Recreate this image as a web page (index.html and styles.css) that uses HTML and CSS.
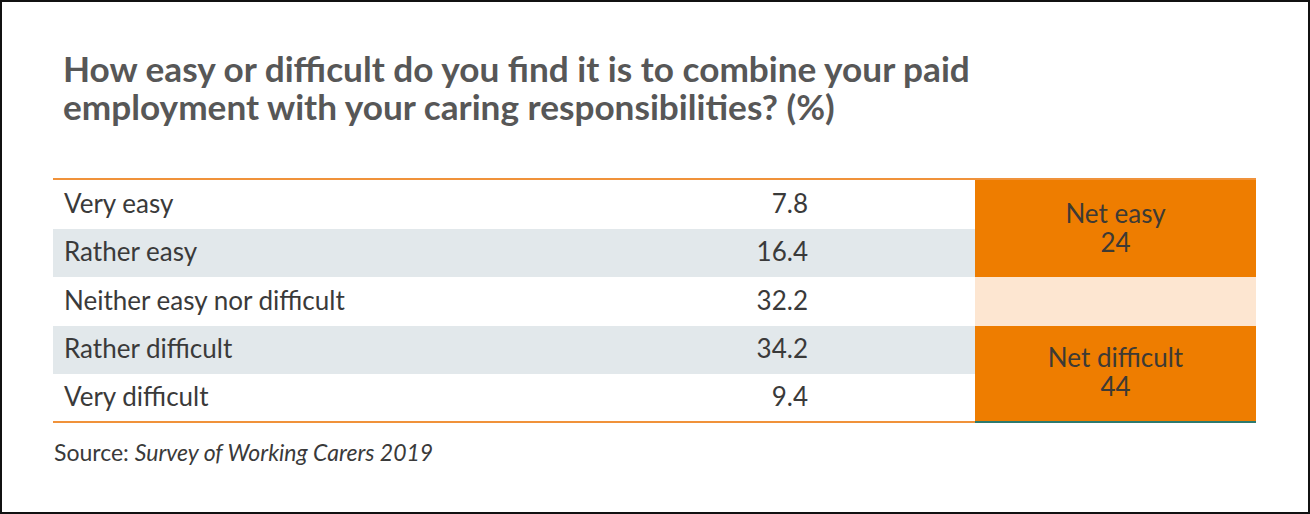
FILE: index.html
```html
<!DOCTYPE html>
<html>
<head>
<meta charset="utf-8">
<link rel="stylesheet" href="styles.css">
</head>
<body>
<div class="frame">
  <h1 class="title">How easy or difficult do you find it is to combine your paid<br>employment with your caring responsibilities? (%)</h1>
  <div class="table">
    <div class="cell label">Very easy</div><div class="cell value">7.8</div>
    <div class="net net-easy"><span>Net easy</span><span>24</span></div>
    <div class="cell label alt">Rather easy</div><div class="cell value alt">16.4</div>
    <div class="cell label">Neither easy nor difficult</div><div class="cell value">32.2</div>
    <div class="neutral"></div>
    <div class="cell label alt">Rather difficult</div><div class="cell value alt">34.2</div>
    <div class="net net-diff"><span>Net difficult</span><span>44</span></div>
    <div class="cell label last">Very difficult</div><div class="cell value last">9.4</div>
  </div>
  <p class="source">Source: <em>Survey of Working Carers 2019</em></p>
</div>
</body>
</html>
```

FILE: styles.css
```css
html, body {
  margin: 0;
  padding: 0;
  background: #ffffff;
}

.frame {
  box-sizing: border-box;
  width: 1310px;
  height: 514px;
  border: 2px solid #111;
  padding: 0 0 0 51px;
  font-family: Lato, "Open Sans", sans-serif;
  color: #3a3a3a;
}

.title {
  margin: 47px 0 0 10px;
  font-size: 35.2px;
  line-height: 38px;
  font-weight: 700;
  color: #575757;
}

.table {
  margin-top: 53px;
  width: 1203px;
  display: grid;
  grid-template-columns: 600px 322px 281px;
  grid-template-rows: repeat(5, 48.5px);
  border-top: 2px solid #f0923a;
}

.cell {
  box-sizing: border-box;
  display: flex;
  align-items: center;
  padding-bottom: 3px;
  font-size: 26px;
  color: #3a3a3a;
}

.label {
  padding-left: 11px;
}

.value {
  justify-content: flex-end;
  padding-right: 167px;
}

.alt {
  background: #e2e8eb;
}

.last {
  border-bottom: 2px solid #f0923a;
}

.net {
  grid-column: 3;
  background: #ee7d00;
  display: flex;
  flex-direction: column;
  align-items: center;
  justify-content: center;
  padding-bottom: 2px;
  font-size: 26px;
  line-height: 29px;
  color: #3d3a35;
}

.net-easy {
  grid-row: 1 / span 2;
}

.net-diff {
  grid-row: 4 / span 2;
  border-bottom: 2px solid #2d7a6e;
}

.neutral {
  grid-column: 3;
  grid-row: 3;
  background: #fde6d1;
}

.source {
  margin: 15px 0 0 1px;
  font-size: 23px;
  color: #3a3a3a;
}

.source em {
  font-style: italic;
}
```
